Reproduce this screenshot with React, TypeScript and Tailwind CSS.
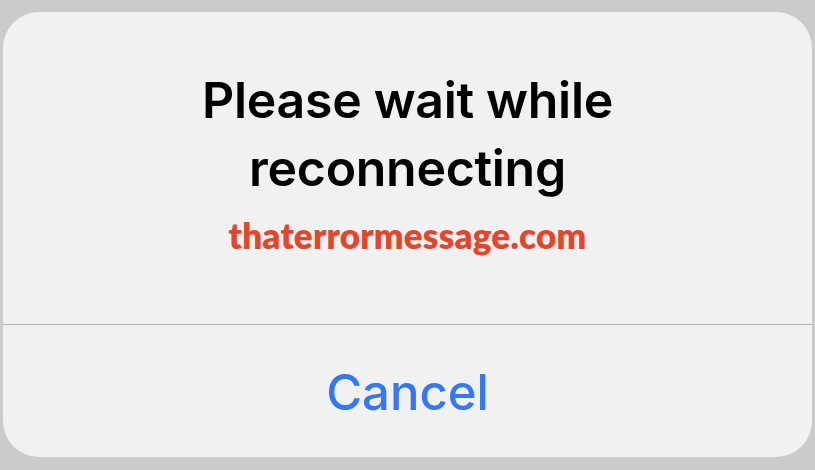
export default function App() {
  return (
    <div className="w-[815px] h-[470px] bg-[#cbcbcb] pt-[12px] pl-[3px]" style={{ fontFamily: 'Inter, "Noto Sans", sans-serif' }}>
      <div className="w-[809px] h-[445px] rounded-[36px] bg-[#f1f1f1] flex flex-col overflow-hidden">
        <div className="h-[312px] flex flex-col items-center pt-[54px]">
          <h1 className="text-[50px] leading-[68px] font-semibold text-black text-center tracking-[-0.3px]">
            Please wait while
            <br />
            reconnecting
          </h1>
          <p
            className="mt-[12px] text-[35px] leading-[42px] font-extrabold text-[#e4462b] tracking-[0.2px]"
            style={{ fontFamily: 'Lato, "Open Sans", sans-serif' }}
          >
            thaterrormessage.com
          </p>
        </div>
        <div className="h-px bg-[#b4b4b4]" />
        <div className="flex-1 flex items-center justify-center pt-[3px]">
          <span className="text-[49px] font-medium text-[#3478f6]">Cancel</span>
        </div>
      </div>
    </div>
  );
}
